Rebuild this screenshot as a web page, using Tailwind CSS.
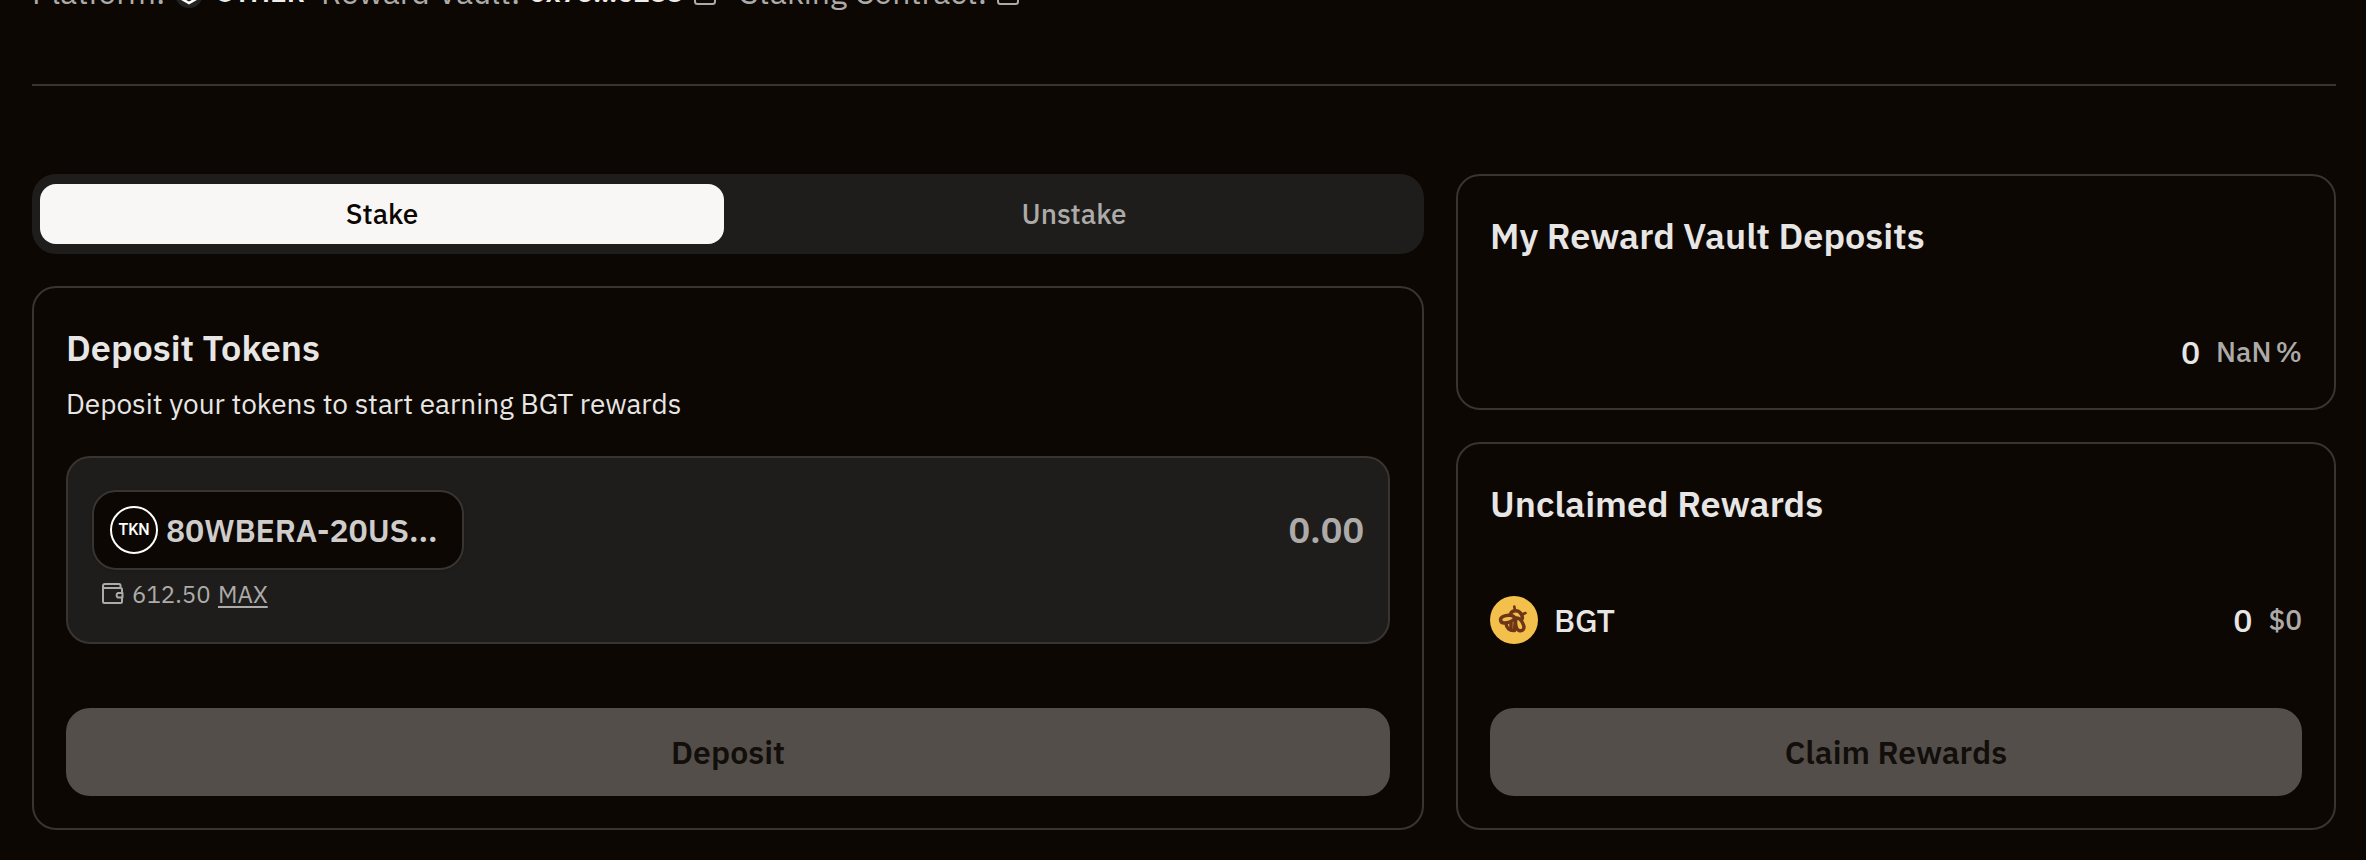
<!DOCTYPE html>
<html lang="en">
<head>
<meta charset="utf-8">
<title>Reward Vault</title>
<script src="https://cdn.jsdelivr.net/npm/@tailwindcss/browser@4"></script>
</head>
<body class="bg-[#0c0702] text-[#e8e6e4] font-['IBM_Plex_Sans',Inter,sans-serif] w-[2366px] h-[860px] overflow-hidden">
<div class="px-8 flow-root">
  <!-- Vault details -->
  <div class="flow-root h-[86px] border-b-2 border-[#383432] -mr-0.5">
    <div class="flex items-center h-10 -mt-7 whitespace-nowrap text-[32px] leading-10 text-[#adaba9]">
      <span class="w-[143px]">Platform:</span>
      <svg class="w-7 h-7 shrink-0 mt-1" viewBox="0 0 28 28"><circle cx="14" cy="14" r="14" fill="#232220"/><path d="M14 5l8 4.500v9L14 23l-8-4.500v-9z" fill="none" stroke="#fff" stroke-width="2.500"/></svg>
      <span class="ml-3 w-[106px] text-[28px] font-semibold text-[#eeedeb] -tracking-[0.2px]">OTHER</span>
      <span class="w-[208px]">Reward Vault:</span>
      <span class="w-[165px] text-[28px] font-semibold text-[#eeedeb] -tracking-[0.4px]">0x75...6288</span>
      <svg class="w-[22px] h-6 shrink-0 mt-1.5" viewBox="0 0 22 24"><rect x="1" y="3" width="20" height="18" rx="2.500" fill="none" stroke="#adaba9" stroke-width="2"/></svg>
      <span class="ml-6 w-[257px]">Staking Contract:</span>
      <svg class="w-[22px] h-6 shrink-0 mt-1.5" viewBox="0 0 22 24"><rect x="1" y="3" width="20" height="18" rx="2.500" fill="none" stroke="#adaba9" stroke-width="2"/></svg>
    </div>
  </div>

  <div class="flex gap-8 mt-[88px] -mr-0.5">
    <!-- Staking column -->
    <div class="w-[1392px] shrink-0">
      <div class="flex h-20 rounded-3xl bg-[#1e1d1b] px-2 py-2.5 text-[28px] font-medium">
        <button class="w-[684px] shrink-0 rounded-2xl bg-[#f8f7f5] text-[#0c0702]">Stake</button>
        <button class="flex-1 pl-2 text-[#adaba9]">Unstake</button>
      </div>

      <section class="mt-8 h-[544px] rounded-3xl border-2 border-[#383432] p-8">
        <h2 class="text-[36px] leading-[56px] font-semibold">Deposit Tokens</h2>
        <p class="text-[28px] leading-[56px]">Deposit your tokens to start earning BGT rewards</p>
        <div class="mt-6 h-[188px] rounded-3xl border-2 border-[#383432] bg-[#1e1d1b] px-6 pt-8">
          <div class="flex justify-between items-center">
            <div class="flex items-center h-20 w-[372px] rounded-3xl border-2 border-[#383432] bg-[#0c0702] pl-4 shadow-sm">
              <span class="flex items-center justify-center w-12 h-12 rounded-full border-2 border-white font-[Roboto,sans-serif] text-[16px] font-medium text-white">TKN</span>
              <span class="ml-2 text-[32px] font-semibold text-[#cfcdcc] -tracking-[0.1px]">80WBERA-20US...</span>
            </div>
            <span class="text-[36px] font-semibold text-[#adaba9]">0.00</span>
          </div>
          <div class="flex items-center h-12 pl-2.5 text-[24px] text-[#adaba9]">
            <svg class="w-[22px] h-[22px]" viewBox="0 0 22 22" fill="none" stroke="#adaba9" stroke-width="2" stroke-linejoin="round" stroke-linecap="round"><path d="M18.500 5V2.500a1.500 1.500 0 0 0-1.500-1.500H3A2 2 0 0 0 1 3v15.500A1.500 1.500 0 0 0 2.500 20H18.500a1.500 1.500 0 0 0 1.500-1.500V15M1 5h17.500A1.500 1.500 0 0 1 20 6.500V9.500M20.500 10h-4.500a2.500 2.500 0 0 0 0 4.500h4.500z"/></svg>
            <span class="ml-2 w-[86px]">612.50</span>
            <span class="underline decoration-2 underline-offset-[3px]">MAX</span>
          </div>
        </div>
        <button class="mt-16 block w-full h-[88px] rounded-3xl bg-[#544e4a] text-[32px] font-semibold text-[#120e0b]">Deposit</button>
      </section>
    </div>

    <!-- Rewards column -->
    <div class="w-[880px] shrink-0">
      <section class="h-[236px] rounded-3xl border-2 border-[#383432] p-8">
        <h2 class="text-[36px] leading-[56px] font-semibold">My Reward Vault Deposits</h2>
        <div class="mt-16 h-12 flex justify-end items-center">
          <span class="text-[32px] font-medium">0</span>
          <span class="ml-4 text-[28px] font-medium text-[#adaba9]">NaN</span>
          <span class="ml-1 text-[28px] font-medium text-[#adaba9]">%</span>
        </div>
      </section>
      <section class="mt-8 h-[388px] rounded-3xl border-2 border-[#383432] p-8">
        <h2 class="text-[36px] leading-[56px] font-semibold">Unclaimed Rewards</h2>
        <div class="mt-16 h-12 flex items-center">
          <svg class="w-12 h-12" viewBox="0 0 48 48"><circle cx="24" cy="24" r="24" fill="#f3c14b"/><g fill="none" stroke="#6f3518" stroke-width="3.500" stroke-linecap="round" stroke-linejoin="round"><path stroke-width="2.600" d="M24.300 10.500L25 15M35.500 17L32 18.500"/><path d="M20.500 18c1.500-4 7-4 9.500-1.500s3 4 2 6.500"/><path d="M25 22C23 18.500 17 18.500 13 20.500s-2.500 6.500 1 6.500S22 26 25 22z"/><path d="M26 22C29 21.500 32 25 33.500 29s-1 6.500-4.500 5.500-4-8-3-12.500z"/><path d="M16 27.500c.5 4.500 3.500 7.500 8.500 7l1-12M21 27v5"/></g></svg>
          <span class="ml-4 text-[32px] font-medium">BGT</span>
          <span class="ml-auto text-[32px] font-medium">0</span>
          <span class="ml-4 text-[28px] font-medium text-[#adaba9]">$0</span>
        </div>
        <button class="mt-16 block w-full h-[88px] rounded-3xl bg-[#544e4a] text-[32px] font-semibold text-[#120e0b]">Claim Rewards</button>
      </section>
    </div>
  </div>
</div>
</body>
</html>
